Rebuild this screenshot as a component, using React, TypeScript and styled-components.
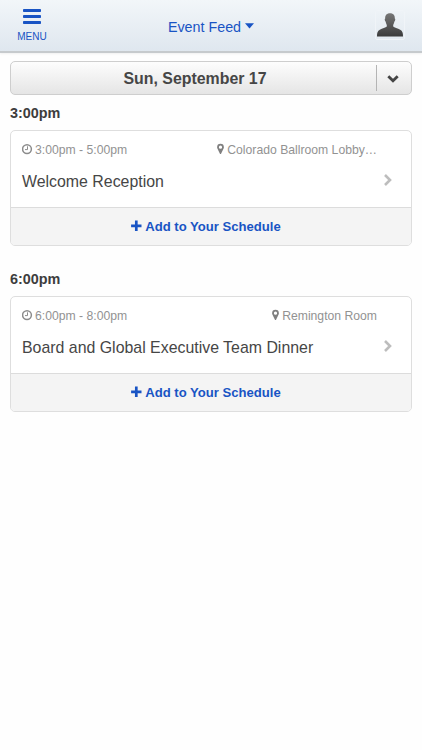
import React from "react";
import styled, { createGlobalStyle } from "styled-components";

const GlobalStyle = createGlobalStyle`
  * { box-sizing: border-box; }
  body {
    margin: 0;
    background: #fefefe;
    font-family: "Liberation Sans", Arial, Helvetica, sans-serif;
    color: #464646;
  }
  button { font-family: inherit; margin: 0; padding: 0; border: 0; background: none; }
`;

const Page = styled.div`
  display: flex;
  flex-direction: column;
`;

const Header = styled.header`
  height: 53px;
  display: grid;
  grid-template-columns: 64px 1fr 64px;
  background: linear-gradient(#f2f6f9, #dfe7ef) padding-box;
  border-bottom: 2px solid #c6cacd;
  box-shadow: 0 1px 2px rgba(0, 0, 0, 0.06);
`;

const MenuButton = styled.button`
  display: flex;
  flex-direction: column;
  align-items: center;
  padding-top: 9px;
  color: #1954c4;
  font-size: 10px;
  line-height: 12px;
  gap: 7px;
`;

const FeedButton = styled.button`
  display: flex;
  justify-content: center;
  align-items: flex-start;
  gap: 4px;
  padding: 18px 0 0 0;
  color: #1954c4;
  font-size: 14.3px;
  line-height: 18px;
  svg { margin-top: 5px; }
`;

const Avatar = styled.div`
  margin: 10px 0 0 17px;
  width: 30px;
  height: 30px;
  padding: 2px 1px 0;
  border: 1px solid #f0f4f8;
  border-radius: 2px;
`;

const Content = styled.main`
  display: flex;
  flex-direction: column;
  padding: 8px 10px 0;
`;

const DateBar = styled.div`
  height: 34px;
  display: grid;
  grid-template-columns: 1fr 35px;
  align-items: start;
  border: 1px solid #cecece;
  border-radius: 5px;
  background: linear-gradient(#fdfdfd, #e5e5e5);
`;

const DateLabel = styled.div`
  font-size: 15.9px;
  font-weight: bold;
  line-height: 18px;
  text-align: center;
  padding: 8px 0 0 3px;
`;

const DateToggle = styled.button`
  height: 26px;
  margin-top: 3px;
  display: flex;
  align-items: center;
  justify-content: center;
  padding: 2px 2px 0 0;
  border-left: 1px solid #b4b4b4;
`;

const TimeHeading = styled.h2`
  margin: 0;
  padding-top: 9px;
  height: 35px;
  font-size: 14.4px;
  line-height: 18px;
  color: #3d3d3d;
`;

const Card = styled.article`
  height: 116px;
  margin-bottom: 15px;
  border: 1px solid #dedede;
  border-radius: 5px;
  overflow: hidden;
  background: #fff;
`;

const CardBody = styled.div`
  height: 76px;
  display: grid;
  grid-template-columns: 1fr 34px;
  padding-left: 11px;
`;

const CardInfo = styled.div`
  padding-top: 11px;
`;

const Meta = styled.div`
  display: flex;
  justify-content: space-between;
  color: #929292;
  font-size: 12.2px;
  line-height: 16px;
`;

const MetaItem = styled.span<{ $gap: number }>`
  display: flex;
  gap: ${(p) => p.$gap}px;
`;

const Title = styled.div`
  margin-top: 14px;
  font-size: 15.9px;
  line-height: 20px;
  white-space: nowrap;
`;

const Arrow = styled.div`
  padding: 43px 0 0 6px;
`;

const AddButton = styled.button`
  width: 100%;
  height: 38px;
  display: flex;
  align-items: center;
  justify-content: center;
  gap: 3px;
  padding-right: 10px;
  border-top: 1px solid #dcdcdc;
  background: #f4f4f4;
  color: #1954c4;
  font-size: 13.1px;
  font-weight: bold;
`;

const Icon = styled.svg`
  display: block;
  flex: none;
`;

const ClockIcon = () => (
  <Icon width="11" height="15" viewBox="0 0 11 15" fill="none" stroke="#8c8c8c">
    <circle cx="5" cy="7.1" r="4.4" strokeWidth="1.5" />
    <path d="M5.5 4.3V7.6H3" strokeWidth="1" />
  </Icon>
);

const PinIcon = () => (
  <Icon width="7" height="15" viewBox="0 0 7 15">
    <path
      fill="#808080"
      fillRule="evenodd"
      d="M3.5 1.8A3.4 3.4 0 0 0 .1 5.2Q.1 6 .4 6.6L2.8 11.5Q3.5 12.6 4.2 11.5L6.6 6.6Q6.9 6 6.9 5.2A3.4 3.4 0 0 0 3.5 1.8ZM3.5 3.6A1.6 1.6 0 1 1 3.5 6.8A1.6 1.6 0 1 1 3.5 3.6Z"
    />
  </Icon>
);

type Event = { start: string; end: string; place: string; title: string };

const events: Event[] = [
  { start: "3:00pm", end: "5:00pm", place: "Colorado Ballroom Lobby…", title: "Welcome Reception" },
  { start: "6:00pm", end: "8:00pm", place: "Remington Room", title: "Board and Global Executive Team Dinner" },
];

const EventCard = ({ event }: { event: Event }) => (
  <Card>
    <CardBody>
      <CardInfo>
        <Meta>
          <MetaItem $gap={2}>
            <ClockIcon />
            {event.start} - {event.end}
          </MetaItem>
          <MetaItem $gap={3}>
            <PinIcon />
            {event.place}
          </MetaItem>
        </Meta>
        <Title>{event.title}</Title>
      </CardInfo>
      <Arrow>
        <Icon width="10" height="12" viewBox="0 0 10 12">
          <path d="M2 1L7 6L2 11" fill="none" stroke="#bdbdbd" strokeWidth="2.6" />
        </Icon>
      </Arrow>
    </CardBody>
    <AddButton>
      <Icon width="11" height="13" viewBox="0 0 11 13">
        <path d="M5.3 .6V11M.1 5.8H10.5" stroke="#1954c4" strokeWidth="2.7" />
      </Icon>
      Add to Your Schedule
    </AddButton>
  </Card>
);

export default function App() {
  return (
    <Page>
      <GlobalStyle />
      <Header>
        <MenuButton>
          <Icon width="18" height="15" viewBox="0 0 18 15" fill="#1954c4">
            <rect y="0" width="18" height="3" rx=".8" />
            <rect y="6" width="18" height="3" rx=".8" />
            <rect y="12" width="18" height="3" rx=".8" />
          </Icon>
          MENU
        </MenuButton>
        <FeedButton>
          Event Feed
          <Icon width="9" height="6" viewBox="0 0 9 6">
            <path d="M0 .2H9L4.5 5.4Z" fill="#1954c4" />
          </Icon>
        </FeedButton>
        <Avatar>
          <Icon width="26" height="24" viewBox="0 0 26 24">
            <defs>
              <linearGradient id="person" x1="0" y1="0" x2="0" y2="1">
                <stop offset="0" stopColor="#777" />
                <stop offset="1" stopColor="#3b3b3b" />
              </linearGradient>
            </defs>
            <path
              fill="url(#person)"
              d="M13 .3C9.6 .3 8 2.5 8.2 5.5C7.3 5.8 7.8 8.3 8.7 8.8C9 10.6 9.6 11.4 9.8 12.2V13.6C8.8 14.8 5.2 15.6 2.8 16.7C.5 17.8 0 19.8 0 23.5H26C26 19.8 25.5 17.8 23.2 16.7C20.8 15.6 17.2 14.8 16.2 13.6V12.2C16.4 11.4 17 10.6 17.3 8.8C18.2 8.3 18.7 5.8 17.8 5.5C18 2.5 16.4 .3 13 .3Z"
            />
          </Icon>
        </Avatar>
      </Header>
      <Content>
        <DateBar>
          <DateLabel>Sun, September 17</DateLabel>
          <DateToggle>
            <Icon width="12" height="8" viewBox="0 0 12 8">
              <path d="M1.3 1.2L6 5.8L10.7 1.2" fill="none" stroke="#444" strokeWidth="2.8" />
            </Icon>
          </DateToggle>
        </DateBar>
        {events.map((event) => (
          <React.Fragment key={event.start}>
            <TimeHeading>{event.start}</TimeHeading>
            <EventCard event={event} />
          </React.Fragment>
        ))}
      </Content>
    </Page>
  );
}
